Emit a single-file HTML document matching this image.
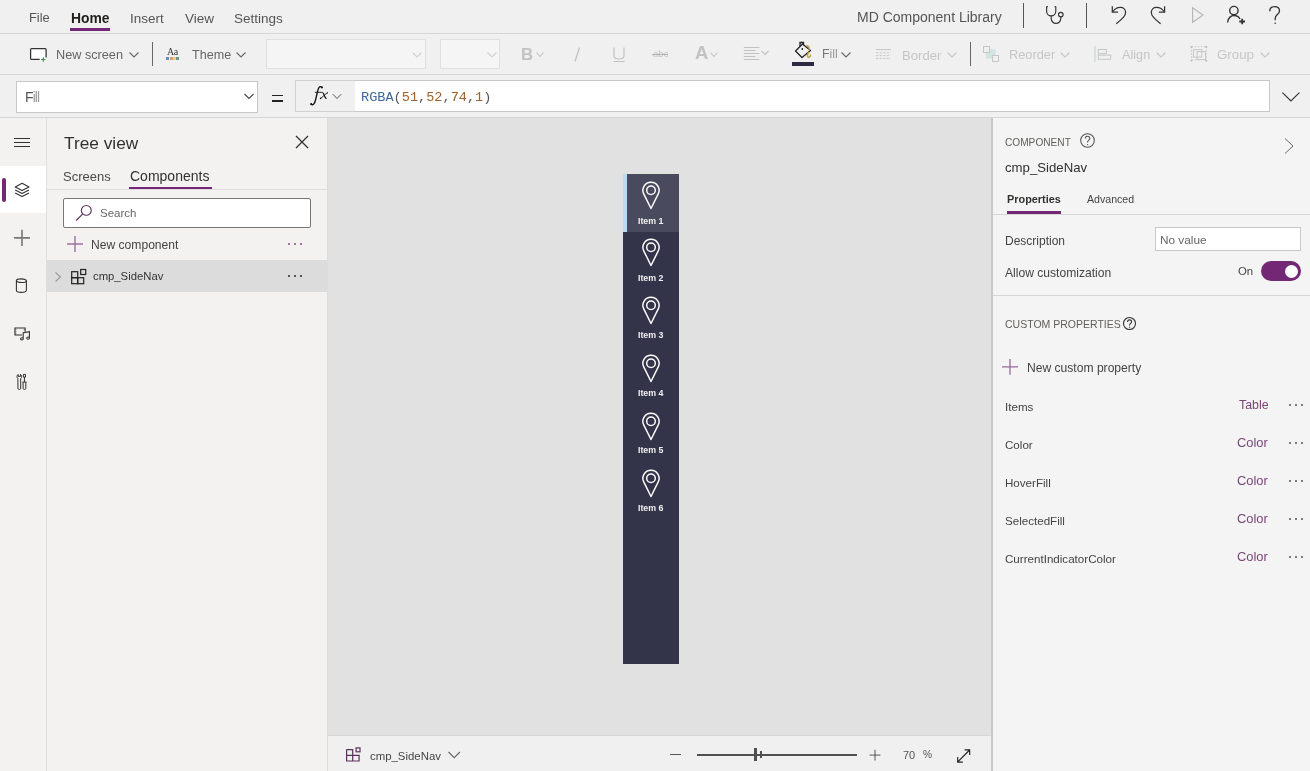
<!DOCTYPE html>
<html><head><meta charset="utf-8"><style>
html,body{margin:0;padding:0;width:1310px;height:771px;overflow:hidden;background:#f0f0f0;position:relative;font-family:"Liberation Sans",sans-serif}
.t{position:absolute;white-space:pre;will-change:transform}
svg{overflow:visible}
</style></head><body>
<div style="position:absolute;left:0px;top:0px;width:1310px;height:33px;background:#f0f0f0"></div>
<div style="position:absolute;left:0px;top:33px;width:1310px;height:1px;background:#d6d6d6"></div>
<div style="position:absolute;left:0px;top:34px;width:1310px;height:40px;background:#f0f0f0"></div>
<div style="position:absolute;left:0px;top:74px;width:1310px;height:1px;background:#d6d6d6"></div>
<div style="position:absolute;left:0px;top:75px;width:1310px;height:42px;background:#f0f0f0"></div>
<div style="position:absolute;left:0px;top:117px;width:1310px;height:1px;background:#d6d6d6"></div>
<div style="position:absolute;left:0px;top:118px;width:46px;height:653px;background:#f3f2f1"></div>
<div style="position:absolute;left:46px;top:118px;width:1px;height:653px;background:#e1dfdd"></div>
<div style="position:absolute;left:0px;top:166px;width:46px;height:47px;background:#ffffff"></div>
<div style="position:absolute;left:47px;top:118px;width:280px;height:653px;background:#f3f2f1"></div>
<div style="position:absolute;left:327px;top:118px;width:1px;height:653px;background:#dcdcdc"></div>
<div style="position:absolute;left:328px;top:118px;width:663px;height:617px;background:#e1e1e1"></div>
<div style="position:absolute;left:328px;top:735px;width:663px;height:1px;background:#d6d6d6"></div>
<div style="position:absolute;left:328px;top:736px;width:663px;height:35px;background:#f0f0f0"></div>
<div style="position:absolute;left:991px;top:118px;width:2px;height:653px;background:#c8c8c8"></div>
<div style="position:absolute;left:993px;top:118px;width:317px;height:653px;background:#f4f4f4"></div>
<div class="t" style="left:28.60px;top:12.08px;font-size:12.9px;line-height:12.9px;color:#555;font-weight:400;font-family:'Liberation Sans', sans-serif;">File</div>
<div class="t" style="left:70.50px;top:11.83px;font-size:13.9px;line-height:13.9px;color:#201f1e;font-weight:700;font-family:'Liberation Sans', sans-serif;">Home</div>
<div style="position:absolute;left:70px;top:28px;width:40px;height:3px;background:#742774"></div>
<div class="t" style="left:130.30px;top:11.57px;font-size:13.5px;line-height:13.5px;color:#555;font-weight:400;font-family:'Liberation Sans', sans-serif;">Insert</div>
<div class="t" style="left:184.70px;top:11.57px;font-size:13.5px;line-height:13.5px;color:#555;font-weight:400;font-family:'Liberation Sans', sans-serif;">View</div>
<div class="t" style="left:234.00px;top:11.57px;font-size:13.5px;line-height:13.5px;color:#555;font-weight:400;font-family:'Liberation Sans', sans-serif;">Settings</div>
<div class="t" style="left:857.00px;top:10.35px;font-size:14px;line-height:14px;color:#555;font-weight:400;font-family:'Liberation Sans', sans-serif;">MD Component Library</div>
<div style="position:absolute;left:1023px;top:3px;width:1px;height:25px;background:#555"></div>
<div style="position:absolute;left:1086px;top:3px;width:1px;height:25px;background:#555"></div>
<svg style="position:absolute;left:1040px;top:3px;" width="30" height="26" viewBox="0 0 30 26" fill="none"><path d="M6.6 3.6 V8.3 a4.6 4.6 0 0 0 9.2 0 V3.6" stroke="#333" stroke-width="1.15"/><path d="M6.6 3.6 h1.2 M15.8 3.6 h-1.2" stroke="#333" stroke-width="1.15"/><path d="M11.2 12.9 V15.6 a4.8 4.8 0 0 0 9.6 0 V13.8" stroke="#333" stroke-width="1.15"/><circle cx="20.8" cy="11.6" r="2.3" stroke="#333" stroke-width="1.15"/></svg>
<svg style="position:absolute;left:1108px;top:3px;" width="22" height="24" viewBox="0 0 22 24" fill="none"><path d="M4.8 8.8 C8 3.5 17.6 2.2 17.6 9.6 C17.6 12.8 15 15 8.3 20.8" stroke="#333" stroke-width="1.25"/><path d="M4.3 3.2 V9 H10" stroke="#333" stroke-width="1.25"/></svg>
<svg style="position:absolute;left:1147px;top:3px;" width="22" height="24" viewBox="0 0 22 24" fill="none"><g transform="translate(21.9,0) scale(-1,1)"><path d="M4.8 8.8 C8 3.5 17.6 2.2 17.6 9.6 C17.6 12.8 15 15 8.3 20.8" stroke="#333" stroke-width="1.25"/><path d="M4.3 3.2 V9 H10" stroke="#333" stroke-width="1.25"/></g></svg>
<svg style="position:absolute;left:1190px;top:5px;" width="16" height="20" viewBox="0 0 16 20" fill="none"><path d="M2.6 2.7 L13 10 L2.6 17.3 Z" stroke="#b8b8b8" stroke-width="1.2" stroke-linejoin="miter"/></svg>
<svg style="position:absolute;left:1224px;top:3px;" width="24" height="24" viewBox="0 0 24 24" fill="none"><circle cx="9.9" cy="7.6" r="4.2" stroke="#333" stroke-width="1.4"/><path d="M3.6 19.5 C4 14.5 7.5 12.5 9.9 12.5 C12.5 12.5 15 14 16 16" stroke="#333" stroke-width="1.4"/><path d="M15.3 18.5 H21 M18.2 15.8 V21.2" stroke="#333" stroke-width="1.8"/></svg>
<svg style="position:absolute;left:1266px;top:3px;" width="18" height="24" viewBox="0 0 18 24" fill="none"><path d="M3.8 8.2 C3.8 4.8 6.2 3.6 8.6 3.6 C11.3 3.6 13.5 5.2 13.5 8 C13.5 11.4 9.2 11.8 9.2 15.2 V17.3" stroke="#333" stroke-width="1.3"/><circle cx="9.2" cy="20.3" r="0.8" fill="#333"/></svg>
<svg style="position:absolute;left:28px;top:46px;" width="22" height="18" viewBox="0 0 22 18" fill="none"><rect x="2.6" y="2.5" width="15.5" height="10.9" fill="#fff"/><path d="M11.7 13.4 H3.6 Q2.6 13.4 2.6 12.4 V3.5 Q2.6 2.5 3.6 2.5 H17.1 Q18.1 2.5 18.1 3.5 V11.5" stroke="#333" stroke-width="1.25" fill="none"/><path d="M15.3 11.2 V15.8 M13 13.5 H17.6" stroke="#3f9050" stroke-width="1.15"/></svg>
<div class="t" style="left:56.40px;top:48.95px;font-size:12.7px;line-height:12.7px;color:#666;font-weight:400;font-family:'Liberation Sans', sans-serif;">New screen</div>
<svg style="position:absolute;left:127px;top:50px;" width="14" height="10" viewBox="0 0 14 10" fill="none"><path d="M2.5 2.5 L7 7 L11.5 2.5" stroke="#666" stroke-width="1.1"/></svg>
<div style="position:absolute;left:152px;top:42px;width:1px;height:24px;background:#666"></div>
<div class="t" style="left:166.50px;top:47.23px;font-size:10px;line-height:10px;color:#333;font-weight:400;font-family:'Liberation Sans', sans-serif;font-family:&quot;Liberation Serif&quot;,serif;letter-spacing:-0.5px">Aa</div>
<div style="position:absolute;left:166px;top:57px;width:3px;height:3px;background:#6a8cb8"></div>
<div style="position:absolute;left:170px;top:57px;width:3px;height:3px;background:#dca070"></div>
<div style="position:absolute;left:173px;top:57px;width:3px;height:3px;background:#e6cc90"></div>
<div style="position:absolute;left:176px;top:57px;width:3px;height:3px;background:#6a9a80"></div>
<div class="t" style="left:191.80px;top:49.03px;font-size:12.6px;line-height:12.6px;color:#666;font-weight:400;font-family:'Liberation Sans', sans-serif;">Theme</div>
<svg style="position:absolute;left:234px;top:50px;" width="14" height="10" viewBox="0 0 14 10" fill="none"><path d="M2.5 2.5 L7 7 L11.5 2.5" stroke="#666" stroke-width="1.1"/></svg>
<div style="position:absolute;left:266px;top:39px;width:160px;height:30px;background:#f5f5f5;border:1px solid #e0e0e0;box-sizing:border-box"></div>
<svg style="position:absolute;left:411.3px;top:49.5px;" width="12" height="10" viewBox="0 0 12 10" fill="none"><path d="M1.5 2.5 L6 7 L10.5 2.5" stroke="#d0d0d0" stroke-width="1.1"/></svg>
<div style="position:absolute;left:440px;top:39px;width:60px;height:30px;background:#f5f5f5;border:1px solid #e0e0e0;box-sizing:border-box"></div>
<svg style="position:absolute;left:485.5px;top:49.5px;" width="12" height="10" viewBox="0 0 12 10" fill="none"><path d="M1.5 2.5 L6 7 L10.5 2.5" stroke="#d0d0d0" stroke-width="1.1"/></svg>
<div class="t" style="left:521.00px;top:46.78px;font-size:16.8px;line-height:16.8px;color:#c2c2c2;font-weight:700;font-family:'Liberation Sans', sans-serif;">B</div>
<svg style="position:absolute;left:534px;top:50px;" width="12" height="10" viewBox="0 0 12 10" fill="none"><path d="M2.5 2.5 L6 6.5 L9.5 2.5" stroke="#c2c2c2" stroke-width="1.1"/></svg>
<svg style="position:absolute;left:570px;top:44px;" width="14" height="20" viewBox="0 0 14 20" fill="none"><path d="M9.5 3.5 L5 17.5" stroke="#c2c2c2" stroke-width="1.3"/></svg>
<svg style="position:absolute;left:608px;top:44px;" width="22" height="20" viewBox="0 0 22 20" fill="none"><path d="M6 3.5 V11.5 Q6 15 11 15 Q16 15 16 11.5 V3.5 M5.5 17.5 H16.5" stroke="#c2c2c2" stroke-width="1.2"/></svg>
<div class="t" style="left:653.00px;top:48.87px;font-size:9.6px;line-height:9.6px;color:#c2c2c2;font-weight:400;font-family:'Liberation Sans', sans-serif;">abc</div>
<div style="position:absolute;left:652px;top:54px;width:16px;height:1px;background:#b0b0b0"></div>
<div class="t" style="left:694.50px;top:44.34px;font-size:18.5px;line-height:18.5px;color:#c2c2c2;font-weight:700;font-family:'Liberation Sans', sans-serif;">A</div>
<svg style="position:absolute;left:708px;top:50px;" width="12" height="10" viewBox="0 0 12 10" fill="none"><path d="M2.5 2.5 L6 6.5 L9.5 2.5" stroke="#c2c2c2" stroke-width="1.1"/></svg>
<svg style="position:absolute;left:742px;top:44px;" width="30" height="20" viewBox="0 0 30 20" fill="none"><path d="M1.8 3.5 H17.5 M1.8 6.5 H13.5 M1.8 9.5 H17.5 M1.8 12.5 H13.5 M1.8 15.5 H17.5" stroke="#c2c2c2" stroke-width="1"/><path d="M19.5 7 L23 10.5 L26.5 7" stroke="#c2c2c2" stroke-width="1.1"/></svg>
<svg style="position:absolute;left:792px;top:40px;" width="22" height="20" viewBox="0 0 22 20" fill="none"><path d="M3.5 11 L10.5 4 L18.5 10.5 L10 17.5 Z" stroke="#222" stroke-width="1.3" stroke-linejoin="round"/><path d="M8 6.5 V2.5 H11.5 V5" stroke="#222" stroke-width="1.3"/><circle cx="10.3" cy="9" r="0.9" fill="#222"/><path d="M14.5 5.5 Q18 6.5 17 10.5 M17 12 Q14.5 15 16 17 Q18.5 18 18.5 14.5" stroke="#b8a040" stroke-width="1.4"/></svg>
<div style="position:absolute;left:792px;top:62px;width:22px;height:4px;background:#2b2a40"></div>
<div class="t" style="left:822.00px;top:48.30px;font-size:12.4px;line-height:12.4px;color:#777;font-weight:400;font-family:'Liberation Sans', sans-serif;">F<span style="color:#9a9a9a">ill</span></div>
<svg style="position:absolute;left:839px;top:50px;" width="14" height="10" viewBox="0 0 14 10" fill="none"><path d="M2.5 2.5 L7 7 L11.5 2.5" stroke="#666" stroke-width="1.1"/></svg>
<svg style="position:absolute;left:874px;top:46px;" width="20" height="16" viewBox="0 0 20 16" fill="none"><path d="M1.9 3.6 H16.8" stroke="#c6c6c6" stroke-width="1"/><path d="M1.9 6.8 H16.8 M1.9 9.6 H16.8 M1.9 12.4 H16.8" stroke="#c6c6c6" stroke-width="1" stroke-dasharray="2.4 1.2"/></svg>
<div class="t" style="left:902.00px;top:48.51px;font-size:13.1px;line-height:13.1px;color:#c6c6c6;font-weight:400;font-family:'Liberation Sans', sans-serif;">Border</div>
<svg style="position:absolute;left:945px;top:50px;" width="14" height="10" viewBox="0 0 14 10" fill="none"><path d="M2.5 2.5 L7 7 L11.5 2.5" stroke="#c6c6c6" stroke-width="1.1"/></svg>
<div style="position:absolute;left:970px;top:42px;width:1px;height:24px;background:#666"></div>
<svg style="position:absolute;left:981px;top:44px;" width="20" height="20" viewBox="0 0 20 20" fill="none"><rect x="5" y="5" width="9.6" height="9.6" fill="#cfe6e3"/><rect x="2.5" y="2.5" width="6" height="6" fill="#f0f0f0" stroke="#c6c6c6" stroke-width="1"/><rect x="11.5" y="11.5" width="6" height="6" fill="#f0f0f0" stroke="#c6c6c6" stroke-width="1"/></svg>
<div class="t" style="left:1008.80px;top:48.76px;font-size:12.8px;line-height:12.8px;color:#c6c6c6;font-weight:400;font-family:'Liberation Sans', sans-serif;">Reorder</div>
<svg style="position:absolute;left:1058px;top:50px;" width="14" height="10" viewBox="0 0 14 10" fill="none"><path d="M2.5 2.5 L7 7 L11.5 2.5" stroke="#c6c6c6" stroke-width="1.1"/></svg>
<svg style="position:absolute;left:1092px;top:44px;" width="22" height="20" viewBox="0 0 22 20" fill="none"><path d="M3 1.8 V17.8" stroke="#b4d4d2" stroke-width="1"/><rect x="6.3" y="5.5" width="8" height="4.2" stroke="#c6c6c6" stroke-width="1"/><rect x="6.3" y="11.1" width="12.4" height="4.2" stroke="#c6c6c6" stroke-width="1"/></svg>
<div class="t" style="left:1121.80px;top:48.85px;font-size:12.7px;line-height:12.7px;color:#c6c6c6;font-weight:400;font-family:'Liberation Sans', sans-serif;">Align</div>
<svg style="position:absolute;left:1154px;top:50px;" width="14" height="10" viewBox="0 0 14 10" fill="none"><path d="M2.5 2.5 L7 7 L11.5 2.5" stroke="#c6c6c6" stroke-width="1.1"/></svg>
<svg style="position:absolute;left:1189px;top:44px;" width="20" height="20" viewBox="0 0 20 20" fill="none"><path d="M2.4 2.7 V15.8 M17.3 2.7 V15.8 M2.4 2.7 H17.3 M2.4 15.8 H17.3" stroke="#c6c6c6" stroke-width="1" stroke-dasharray="1.6 1.6"/><rect x="1.6" y="2" width="1.7" height="1.7" fill="#b8b8b8"/><rect x="16.5" y="2" width="1.7" height="1.7" fill="#b8b8b8"/><rect x="1.6" y="15.9" width="1.7" height="1.7" fill="#b8b8b8"/><rect x="16.5" y="15.9" width="1.7" height="1.7" fill="#b8b8b8"/><rect x="4.4" y="5.7" width="8.4" height="7.4" stroke="#c6c6c6" stroke-width="1"/><rect x="8.1" y="7.7" width="8.4" height="7.9" stroke="#c6c6c6" stroke-width="1"/></svg>
<div class="t" style="left:1217.00px;top:48.34px;font-size:13.3px;line-height:13.3px;color:#c6c6c6;font-weight:400;font-family:'Liberation Sans', sans-serif;">Group</div>
<svg style="position:absolute;left:1258px;top:50px;" width="14" height="10" viewBox="0 0 14 10" fill="none"><path d="M2.5 2.5 L7 7 L11.5 2.5" stroke="#c6c6c6" stroke-width="1.1"/></svg>
<div style="position:absolute;left:16px;top:81px;width:242px;height:32px;background:#fff;border:1px solid #c8c8c8;box-sizing:border-box"></div>
<div class="t" style="left:25.20px;top:89.95px;font-size:14px;line-height:14px;color:#9c9c9c;font-weight:400;font-family:'Liberation Sans', sans-serif;letter-spacing:-0.9px"><span style="color:#555">F</span>ill</div>
<svg style="position:absolute;left:243px;top:92px;" width="12" height="9" viewBox="0 0 12 9" fill="none"><path d="M1.5 2 L6 6.5 L10.5 2" stroke="#444" stroke-width="1.1"/></svg>
<div style="position:absolute;left:271.5px;top:94.8px;width:11px;height:1.6px;background:#222"></div>
<div style="position:absolute;left:271.5px;top:100.1px;width:11px;height:1.6px;background:#222"></div>
<div style="position:absolute;left:295px;top:80px;width:61px;height:32px;background:#f0f0f0;border:1px solid #d0d0d0;box-sizing:border-box"></div>
<svg style="position:absolute;left:306px;top:84px;" width="26" height="24" viewBox="0 0 26 24" fill="none"><path d="M16 3.4 C15.5 2.6 14.6 2.4 13.6 2.9 C12.6 3.5 12 5.5 11.3 8.4 L9.8 15 C9.2 17.8 8.6 19.4 7.5 20.3 C6.8 20.8 5.8 20.8 5.1 20.2" stroke="#111" stroke-width="1.35" stroke-linecap="round"/><circle cx="15.9" cy="3.5" r="1" fill="#111"/><circle cx="5.2" cy="20.1" r="1" fill="#111"/><path d="M8.9 8.3 H16.2" stroke="#111" stroke-width="0.9"/><path d="M16.3 8.5 C17.3 8.6 17.8 10 18.6 12.2 C19.2 13.8 19.6 14.6 20.6 14.3" stroke="#111" stroke-width="1.25"/><path d="M21.6 8.7 C20 9.5 16.5 13 14.5 14.5" stroke="#111" stroke-width="0.9"/><circle cx="14.6" cy="14.4" r="0.8" fill="#111"/><circle cx="21.4" cy="8.8" r="0.6" fill="#111"/></svg>
<svg style="position:absolute;left:331px;top:92px;" width="12" height="9" viewBox="0 0 12 9" fill="none"><path d="M1.8 2.2 L6 6.5 L10.2 2.2" stroke="#555" stroke-width="1"/></svg>
<div style="position:absolute;left:355px;top:80px;width:915px;height:32px;background:#fff;border:1px solid #c8c8c8;border-left:none;box-sizing:border-box"></div>
<div class="t" style="left:361.40px;top:91.00px;font-size:13.58px;line-height:13.58px;color:#555;font-weight:400;font-family:'Liberation Mono', monospace;"><span style="color:#3a6a9e">RGBA</span><span style="color:#555">(</span><span style="color:#a0602a">51</span><span style="color:#555">,</span><span style="color:#a0602a">52</span><span style="color:#555">,</span><span style="color:#a0602a">74</span><span style="color:#555">,</span><span style="color:#a0602a">1</span><span style="color:#555">)</span></div>
<svg style="position:absolute;left:1280px;top:88.5px;" width="24" height="16" viewBox="0 0 24 16" fill="none"><path d="M2.4 3.6 L10.9 12 L19.4 3.6" stroke="#333" stroke-width="1.15"/></svg>
<svg style="position:absolute;left:12px;top:134px;" width="22" height="16" viewBox="0 0 22 16" fill="none"><path d="M2 4.5 H18 M2 8.5 H18 M2 12.5 H18" stroke="#333" stroke-width="1.2"/></svg>
<div style="position:absolute;left:2px;top:178px;width:4px;height:24px;background:#742774;border-radius:2px"></div>
<svg style="position:absolute;left:12px;top:180px;" width="20" height="20" viewBox="0 0 20 20" fill="none"><path d="M10.1 3.3 L17 6.9 L10.1 10.5 L3.2 6.9 Z" stroke="#333" stroke-width="1.1" stroke-linejoin="round"/><path d="M3.2 9.9 L10.1 13.5 L17 9.9 M3.2 12.9 L10.1 16.6 L17 12.9" stroke="#333" stroke-width="1.1" stroke-linejoin="round"/></svg>
<svg style="position:absolute;left:12px;top:228px;" width="20" height="20" viewBox="0 0 20 20" fill="none"><path d="M10 1.8 V17.9 M2.1 9.9 H18" stroke="#777" stroke-width="1.6"/></svg>
<svg style="position:absolute;left:12px;top:276px;" width="20" height="20" viewBox="0 0 20 20" fill="none"><ellipse cx="9.4" cy="4.7" rx="5" ry="1.8" stroke="#333" stroke-width="1.1"/><path d="M4.4 4.7 V14.5 C4.4 17 14.4 17 14.4 14.5 V4.7" stroke="#333" stroke-width="1.1"/></svg>
<svg style="position:absolute;left:12px;top:324px;" width="22" height="20" viewBox="0 0 22 20" fill="none"><path d="M10 11.05 H2.95 V3.95 H13.15 V7.8" stroke="#333" stroke-width="1.1"/><path d="M3.9 5.3 v0.9 M3.9 7.3 v0.9 M3.9 9.3 v0.9 M12.2 5.3 v0.9" stroke="#333" stroke-width="0.9"/><path d="M11.2 14.3 V8.8 L17.4 7.6 V13.6" stroke="#333" stroke-width="1.1"/><ellipse cx="9.9" cy="14.8" rx="1.4" ry="1.1" stroke="#333" stroke-width="1.1"/><ellipse cx="16.1" cy="14.1" rx="1.4" ry="1.1" stroke="#333" stroke-width="1.1"/></svg>
<svg style="position:absolute;left:12px;top:372px;" width="20" height="20" viewBox="0 0 20 20" fill="none"><path d="M5.9 6.6 V16.3 Q5.9 17.4 7.3 17.4 Q8.7 17.4 8.7 16.3 V6.6 C10 5.6 9.9 3 8.4 2.4 V4.4 H6.2 V2.4 C4.7 3 4.6 5.6 5.9 6.6" stroke="#333" stroke-width="1"/><path d="M11.4 2.4 H13.5 V5.1 H11.4 Z M12.45 5.1 V10.1 M10.4 10.1 H14.6 M11.1 10.1 V16.5 Q11.1 17.4 12.45 17.4 Q13.8 17.4 13.8 16.5 V10.1" stroke="#333" stroke-width="1"/></svg>
<div class="t" style="left:64.00px;top:134.56px;font-size:17.3px;line-height:17.3px;color:#323130;font-weight:400;font-family:'Liberation Sans', sans-serif;">Tree view</div>
<svg style="position:absolute;left:292px;top:132px;" width="20" height="20" viewBox="0 0 20 20" fill="none"><path d="M4 4 L16 16 M16 4 L4 16" stroke="#333" stroke-width="1.3"/></svg>
<div class="t" style="left:63.20px;top:170.20px;font-size:13px;line-height:13px;color:#4a4a4a;font-weight:400;font-family:'Liberation Sans', sans-serif;">Screens</div>
<div class="t" style="left:130.40px;top:169.35px;font-size:14px;line-height:14px;color:#323130;font-weight:400;font-family:'Liberation Sans', sans-serif;">Components</div>
<div style="position:absolute;left:129px;top:187px;width:83px;height:2px;background:#742774"></div>
<div style="position:absolute;left:47px;top:189px;width:280px;height:1px;background:#dedede"></div>
<div style="position:absolute;left:63px;top:198px;width:248px;height:30px;background:#fff;border:1px solid #777;border-radius:2px;box-sizing:border-box"></div>
<svg style="position:absolute;left:72px;top:202px;" width="22" height="22" viewBox="0 0 22 22" fill="none"><circle cx="14.3" cy="8.4" r="4.9" stroke="#5c2d5c" stroke-width="1.1"/><path d="M10.8 11.9 L4.2 18.5" stroke="#5c2d5c" stroke-width="1.1"/></svg>
<div class="t" style="left:100.20px;top:208.27px;font-size:11.5px;line-height:11.5px;color:#666;font-weight:400;font-family:'Liberation Sans', sans-serif;">Search</div>
<svg style="position:absolute;left:65px;top:234px;" width="20" height="20" viewBox="0 0 20 20" fill="none"><path d="M10 2 V18 M2 10 H18" stroke="#a070a0" stroke-width="1.4"/></svg>
<div class="t" style="left:91.40px;top:239.36px;font-size:12.1px;line-height:12.1px;color:#444;font-weight:400;font-family:'Liberation Sans', sans-serif;">New component</div>
<div style="position:absolute;left:288px;top:243px;width:2px;height:2px;background:#9e78a0"></div>
<div style="position:absolute;left:294px;top:243px;width:2px;height:2px;background:#9e78a0"></div>
<div style="position:absolute;left:300px;top:243px;width:2px;height:2px;background:#9e78a0"></div>
<div style="position:absolute;left:47px;top:260px;width:280px;height:32px;background:#dcdcdc"></div>
<svg style="position:absolute;left:52px;top:270px;" width="12" height="14" viewBox="0 0 12 14" fill="none"><path d="M3.5 2.5 L8.5 7 L3.5 11.5" stroke="#999" stroke-width="1.1"/></svg>
<svg style="position:absolute;left:68px;top:266px;" width="22" height="22" viewBox="0 0 22 22" fill="none"><rect x="3.7" y="5.7" width="6" height="6" stroke="#222" stroke-width="1.2"/><rect x="3.7" y="11.7" width="6" height="6" stroke="#222" stroke-width="1.2"/><rect x="9.7" y="11.7" width="6" height="6" stroke="#222" stroke-width="1.2"/><rect x="12.7" y="3.5" width="5" height="5" stroke="#222" stroke-width="1.2"/></svg>
<div class="t" style="left:93.20px;top:271.43px;font-size:11.3px;line-height:11.3px;color:#333;font-weight:400;font-family:'Liberation Sans', sans-serif;">cmp_SideNav</div>
<div style="position:absolute;left:288px;top:275px;width:2px;height:2px;background:#555"></div>
<div style="position:absolute;left:294px;top:275px;width:2px;height:2px;background:#555"></div>
<div style="position:absolute;left:300px;top:275px;width:2px;height:2px;background:#555"></div>
<div style="position:absolute;left:623px;top:174px;width:56px;height:490px;background:#33344a"></div>
<div style="position:absolute;left:623px;top:174px;width:56px;height:57.5px;background:#4a4a5e"></div>
<div style="position:absolute;left:623px;top:174px;width:3.5px;height:57.5px;background:#b8dcf5"></div>
<svg style="position:absolute;left:642.05px;top:180.55px;" width="18" height="28" viewBox="0 0 18 28" fill="none"><path d="M9 27.5 L1.74 12.9 A8.1 8.1 0 1 1 16.26 12.9 Z" stroke="#fff" stroke-width="1.45" stroke-linejoin="round"/><circle cx="9" cy="9.3" r="4.3" stroke="#fff" stroke-width="1.45"/></svg>
<div class="t" style="left:638.00px;top:216.65px;font-size:8.8px;line-height:8.8px;color:#f0f0f0;font-weight:700;font-family:'Liberation Sans', sans-serif;">Item 1</div>
<svg style="position:absolute;left:642.05px;top:238.3px;" width="18" height="28" viewBox="0 0 18 28" fill="none"><path d="M9 27.5 L1.74 12.9 A8.1 8.1 0 1 1 16.26 12.9 Z" stroke="#fff" stroke-width="1.45" stroke-linejoin="round"/><circle cx="9" cy="9.3" r="4.3" stroke="#fff" stroke-width="1.45"/></svg>
<div class="t" style="left:638.00px;top:274.05px;font-size:8.8px;line-height:8.8px;color:#f0f0f0;font-weight:700;font-family:'Liberation Sans', sans-serif;">Item 2</div>
<svg style="position:absolute;left:642.05px;top:296.05px;" width="18" height="28" viewBox="0 0 18 28" fill="none"><path d="M9 27.5 L1.74 12.9 A8.1 8.1 0 1 1 16.26 12.9 Z" stroke="#fff" stroke-width="1.45" stroke-linejoin="round"/><circle cx="9" cy="9.3" r="4.3" stroke="#fff" stroke-width="1.45"/></svg>
<div class="t" style="left:638.00px;top:331.45px;font-size:8.8px;line-height:8.8px;color:#f0f0f0;font-weight:700;font-family:'Liberation Sans', sans-serif;">Item 3</div>
<svg style="position:absolute;left:642.05px;top:353.8px;" width="18" height="28" viewBox="0 0 18 28" fill="none"><path d="M9 27.5 L1.74 12.9 A8.1 8.1 0 1 1 16.26 12.9 Z" stroke="#fff" stroke-width="1.45" stroke-linejoin="round"/><circle cx="9" cy="9.3" r="4.3" stroke="#fff" stroke-width="1.45"/></svg>
<div class="t" style="left:638.00px;top:388.85px;font-size:8.8px;line-height:8.8px;color:#f0f0f0;font-weight:700;font-family:'Liberation Sans', sans-serif;">Item 4</div>
<svg style="position:absolute;left:642.05px;top:411.55px;" width="18" height="28" viewBox="0 0 18 28" fill="none"><path d="M9 27.5 L1.74 12.9 A8.1 8.1 0 1 1 16.26 12.9 Z" stroke="#fff" stroke-width="1.45" stroke-linejoin="round"/><circle cx="9" cy="9.3" r="4.3" stroke="#fff" stroke-width="1.45"/></svg>
<div class="t" style="left:638.00px;top:446.25px;font-size:8.8px;line-height:8.8px;color:#f0f0f0;font-weight:700;font-family:'Liberation Sans', sans-serif;">Item 5</div>
<svg style="position:absolute;left:642.05px;top:469.3px;" width="18" height="28" viewBox="0 0 18 28" fill="none"><path d="M9 27.5 L1.74 12.9 A8.1 8.1 0 1 1 16.26 12.9 Z" stroke="#fff" stroke-width="1.45" stroke-linejoin="round"/><circle cx="9" cy="9.3" r="4.3" stroke="#fff" stroke-width="1.45"/></svg>
<div class="t" style="left:638.00px;top:503.65px;font-size:8.8px;line-height:8.8px;color:#f0f0f0;font-weight:700;font-family:'Liberation Sans', sans-serif;">Item 6</div>
<div class="t" style="left:1005.10px;top:138.01px;font-size:10.15px;line-height:10.15px;color:#605e5c;font-weight:400;font-family:'Liberation Sans', sans-serif;">COMPONENT</div>
<svg style="position:absolute;left:1078px;top:131px;" width="19" height="19" viewBox="0 0 19 19" fill="none"><circle cx="9.5" cy="9.5" r="6.8" stroke="#555" stroke-width="1.1"/><path d="M7.3 7.6 C7.3 6 8.3 5.3 9.5 5.3 C10.8 5.3 11.8 6.1 11.8 7.4 C11.8 9.1 9.6 9.2 9.6 11 V11.6" stroke="#555" stroke-width="1.1"/><circle cx="9.6" cy="13.6" r="0.7" fill="#555"/></svg>
<svg style="position:absolute;left:1281px;top:136px;" width="16" height="20" viewBox="0 0 16 20" fill="none"><path d="M4 2.5 L12 10 L4 17.5" stroke="#666" stroke-width="1"/></svg>
<div class="t" style="left:1004.50px;top:160.63px;font-size:13.2px;line-height:13.2px;color:#323130;font-weight:400;font-family:'Liberation Sans', sans-serif;">cmp_SideNav</div>
<div class="t" style="left:1007.30px;top:193.77px;font-size:10.9px;line-height:10.9px;color:#323130;font-weight:700;font-family:'Liberation Sans', sans-serif;">Properties</div>
<div class="t" style="left:1087.40px;top:194.03px;font-size:10.6px;line-height:10.6px;color:#444;font-weight:400;font-family:'Liberation Sans', sans-serif;">Advanced</div>
<div style="position:absolute;left:1007px;top:211px;width:54px;height:3px;background:#742774"></div>
<div style="position:absolute;left:993px;top:214px;width:317px;height:1px;background:#d6d6d6"></div>
<div class="t" style="left:1005.40px;top:234.84px;font-size:12px;line-height:12px;color:#444;font-weight:400;font-family:'Liberation Sans', sans-serif;">Description</div>
<div style="position:absolute;left:1155px;top:227px;width:146px;height:24px;background:#fff;border:1px solid #c8c8c8;box-sizing:border-box"></div>
<div class="t" style="left:1159.90px;top:234.71px;font-size:11.8px;line-height:11.8px;color:#666;font-weight:400;font-family:'Liberation Sans', sans-serif;">No value</div>
<div class="t" style="left:1005.40px;top:266.56px;font-size:12.1px;line-height:12.1px;color:#444;font-weight:400;font-family:'Liberation Sans', sans-serif;">Allow customization</div>
<div class="t" style="left:1237.60px;top:266.35px;font-size:11.4px;line-height:11.4px;color:#444;font-weight:400;font-family:'Liberation Sans', sans-serif;">On</div>
<div style="position:absolute;left:1261px;top:261px;width:40px;height:20px;background:#742774;border-radius:10px"></div>
<div style="position:absolute;left:1284.5px;top:264.5px;width:13px;height:13px;background:#fff;border-radius:50%"></div>
<div style="position:absolute;left:993px;top:295px;width:317px;height:1px;background:#d6d6d6"></div>
<div class="t" style="left:1005.10px;top:319.11px;font-size:10.5px;line-height:10.5px;color:#605e5c;font-weight:400;font-family:'Liberation Sans', sans-serif;">CUSTOM PROPERTIES</div>
<svg style="position:absolute;left:1121px;top:315px;" width="17" height="17" viewBox="0 0 17 17" fill="none"><circle cx="8.5" cy="8.5" r="6" stroke="#333" stroke-width="1.1"/><path d="M6.6 6.9 C6.6 5.5 7.5 4.9 8.5 4.9 C9.7 4.9 10.6 5.6 10.6 6.8 C10.6 8.3 8.6 8.4 8.6 10 V10.4" stroke="#333" stroke-width="1.1"/><circle cx="8.6" cy="12.2" r="0.65" fill="#333"/></svg>
<svg style="position:absolute;left:1000px;top:357px;" width="20" height="20" viewBox="0 0 20 20" fill="none"><path d="M10 2 V17.7 M2 9.9 H18" stroke="#9a6a9a" stroke-width="1.3"/></svg>
<div class="t" style="left:1026.60px;top:361.76px;font-size:12.1px;line-height:12.1px;color:#444;font-weight:400;font-family:'Liberation Sans', sans-serif;">New custom property</div>
<div class="t" style="left:1004.80px;top:401.18px;font-size:11.6px;line-height:11.6px;color:#444;font-weight:400;font-family:'Liberation Sans', sans-serif;">Items</div>
<div class="t" style="left:1238.50px;top:398.60px;font-size:12.4px;line-height:12.4px;color:#7a467a;font-weight:400;font-family:'Liberation Sans', sans-serif;">Table</div>
<div style="position:absolute;left:1289px;top:403.5px;width:2px;height:2px;background:#7a7a7a"></div>
<div style="position:absolute;left:1295px;top:403.5px;width:2px;height:2px;background:#7a7a7a"></div>
<div style="position:absolute;left:1301px;top:403.5px;width:2px;height:2px;background:#7a7a7a"></div>
<div class="t" style="left:1004.80px;top:439.18px;font-size:11.6px;line-height:11.6px;color:#444;font-weight:400;font-family:'Liberation Sans', sans-serif;">Color</div>
<div class="t" style="left:1237.40px;top:436.88px;font-size:12.9px;line-height:12.9px;color:#7a467a;font-weight:400;font-family:'Liberation Sans', sans-serif;">Color</div>
<div style="position:absolute;left:1289px;top:441.5px;width:2px;height:2px;background:#7a7a7a"></div>
<div style="position:absolute;left:1295px;top:441.5px;width:2px;height:2px;background:#7a7a7a"></div>
<div style="position:absolute;left:1301px;top:441.5px;width:2px;height:2px;background:#7a7a7a"></div>
<div class="t" style="left:1004.80px;top:477.18px;font-size:11.6px;line-height:11.6px;color:#444;font-weight:400;font-family:'Liberation Sans', sans-serif;">HoverFill</div>
<div class="t" style="left:1237.40px;top:474.88px;font-size:12.9px;line-height:12.9px;color:#7a467a;font-weight:400;font-family:'Liberation Sans', sans-serif;">Color</div>
<div style="position:absolute;left:1289px;top:479.5px;width:2px;height:2px;background:#7a7a7a"></div>
<div style="position:absolute;left:1295px;top:479.5px;width:2px;height:2px;background:#7a7a7a"></div>
<div style="position:absolute;left:1301px;top:479.5px;width:2px;height:2px;background:#7a7a7a"></div>
<div class="t" style="left:1004.80px;top:515.18px;font-size:11.6px;line-height:11.6px;color:#444;font-weight:400;font-family:'Liberation Sans', sans-serif;">SelectedFill</div>
<div class="t" style="left:1237.40px;top:512.88px;font-size:12.9px;line-height:12.9px;color:#7a467a;font-weight:400;font-family:'Liberation Sans', sans-serif;">Color</div>
<div style="position:absolute;left:1289px;top:517.5px;width:2px;height:2px;background:#7a7a7a"></div>
<div style="position:absolute;left:1295px;top:517.5px;width:2px;height:2px;background:#7a7a7a"></div>
<div style="position:absolute;left:1301px;top:517.5px;width:2px;height:2px;background:#7a7a7a"></div>
<div class="t" style="left:1004.80px;top:553.18px;font-size:11.6px;line-height:11.6px;color:#444;font-weight:400;font-family:'Liberation Sans', sans-serif;">CurrentIndicatorColor</div>
<div class="t" style="left:1237.40px;top:550.88px;font-size:12.9px;line-height:12.9px;color:#7a467a;font-weight:400;font-family:'Liberation Sans', sans-serif;">Color</div>
<div style="position:absolute;left:1289px;top:555.5px;width:2px;height:2px;background:#7a7a7a"></div>
<div style="position:absolute;left:1295px;top:555.5px;width:2px;height:2px;background:#7a7a7a"></div>
<div style="position:absolute;left:1301px;top:555.5px;width:2px;height:2px;background:#7a7a7a"></div>
<svg style="position:absolute;left:344px;top:745px;" width="20" height="20" viewBox="0 0 20 20" fill="none"><path d="M2.6 4.6 H8.7 V16 M2.6 10.4 H15.1 V16 H2.6 V4.6" stroke="#5c2d5c" stroke-width="1.2"/><rect x="12.1" y="2.9" width="3.9" height="3.9" stroke="#5c2d5c" stroke-width="1.2"/></svg>
<div class="t" style="left:369.50px;top:750.95px;font-size:11.4px;line-height:11.4px;color:#444;font-weight:400;font-family:'Liberation Sans', sans-serif;">cmp_SideNav</div>
<svg style="position:absolute;left:446px;top:749px;" width="16" height="12" viewBox="0 0 16 12" fill="none"><path d="M2.5 3 L8.2 8.7 L13.9 3" stroke="#666" stroke-width="1.1"/></svg>
<div style="position:absolute;left:670px;top:754px;width:11px;height:1px;background:#555"></div>
<div style="position:absolute;left:697px;top:754px;width:160px;height:2px;background:#505050"></div>
<div style="position:absolute;left:754px;top:748px;width:3px;height:13px;background:#505050"></div>
<div style="position:absolute;left:759.5px;top:751px;width:2px;height:7px;background:#505050"></div>
<svg style="position:absolute;left:866px;top:746px;" width="18" height="18" viewBox="0 0 18 18" fill="none"><path d="M9 3.8 V14.5 M3.6 9.1 H14.4" stroke="#555" stroke-width="1"/></svg>
<div class="t" style="left:903.20px;top:749.79px;font-size:11px;line-height:11px;color:#555;font-weight:400;font-family:'Liberation Sans', sans-serif;">70</div>
<div class="t" style="left:923.40px;top:750.47px;font-size:10.2px;line-height:10.2px;color:#555;font-weight:400;font-family:'Liberation Sans', sans-serif;">%</div>
<svg style="position:absolute;left:954px;top:746px;" width="20" height="20" viewBox="0 0 20 20" fill="none"><path d="M3.8 15.8 L15.6 4 M10.6 3.9 H15.7 V9 M3.7 11 V16.1 H8.8" stroke="#222" stroke-width="1.15"/></svg>
</body></html>
